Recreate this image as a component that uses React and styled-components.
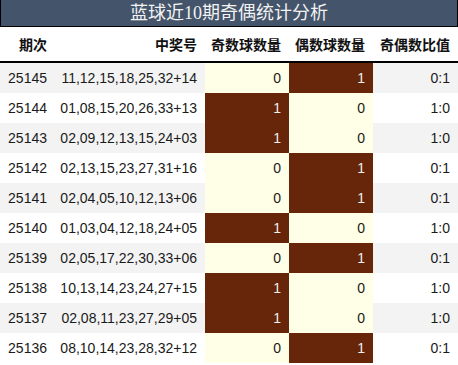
import React from 'react';
import styled, { createGlobalStyle } from 'styled-components';

const GlobalStyle = createGlobalStyle`
  html, body {
    margin: 0;
    padding: 0;
    background: #ffffff;
  }
`;

const Wrap = styled.div`
  width: 458px;
  font-family: "Liberation Sans", "Noto Sans CJK SC", sans-serif;
  color: #1a1a1a;
`;

const Title = styled.div`
  height: 26px;
  border: 1px solid #000;
  border-top: none;
  background: #44546a;
  color: #f2f2f2;
  font-family: "Liberation Serif", "Noto Sans CJK SC", serif;
  font-size: 18px;
  line-height: 26px;
  text-align: center;
`;

const Grid = styled.div`
  display: grid;
  grid-template-columns: 55px 150px 84px 84px 85px;
`;

const HeadCell = styled.div`
  height: 34px;
  border-bottom: 2px solid #000;
  padding-right: 8px;
  display: flex;
  align-items: center;
  justify-content: flex-end;
  font-family: "Noto Sans CJK SC", sans-serif;
  font-weight: 700;
  font-size: 14px;
  color: #111;
`;

const Cell = styled.div`
  height: 30px;
  padding-right: 8px;
  display: flex;
  align-items: center;
  justify-content: flex-end;
  font-size: 14px;
  background: ${p => (p.$hit === undefined ? (p.$alt ? '#f3f3f3' : '#ffffff') : p.$hit ? '#672609' : '#fffee6')};
  color: ${p => (p.$hit ? '#eeeeee' : '#1a1a1a')};
`;

const rows = [
  ['25145', '11,12,15,18,25,32+14', 0, 1],
  ['25144', '01,08,15,20,26,33+13', 1, 0],
  ['25143', '02,09,12,13,15,24+03', 1, 0],
  ['25142', '02,13,15,23,27,31+16', 0, 1],
  ['25141', '02,04,05,10,12,13+06', 0, 1],
  ['25140', '01,03,04,12,18,24+05', 1, 0],
  ['25139', '02,05,17,22,30,33+06', 0, 1],
  ['25138', '10,13,14,23,24,27+15', 1, 0],
  ['25137', '02,08,11,23,27,29+05', 1, 0],
  ['25136', '08,10,14,23,28,32+12', 0, 1],
];

const headers = ['期次', '中奖号', '奇数球数量', '偶数球数量', '奇偶数比值'];

export default function App() {
  return (
    <Wrap>
      <GlobalStyle />
      <Title>蓝球近10期奇偶统计分析</Title>
      <Grid>
        {headers.map(h => (
          <HeadCell key={h}>{h}</HeadCell>
        ))}
        {rows.map(([issue, nums, odd, even], i) => {
          const alt = i % 2 === 0;
          return (
            <React.Fragment key={issue}>
              <Cell $alt={alt}>{issue}</Cell>
              <Cell $alt={alt}>{nums}</Cell>
              <Cell $hit={odd === 1}>{odd}</Cell>
              <Cell $hit={even === 1}>{even}</Cell>
              <Cell $alt={alt}>{`${odd}:${even}`}</Cell>
            </React.Fragment>
          );
        })}
      </Grid>
    </Wrap>
  );
}
